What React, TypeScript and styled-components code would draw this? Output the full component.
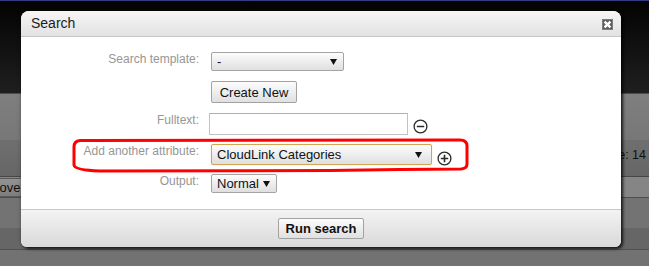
import React from "react";
import styled, { createGlobalStyle } from "styled-components";

const Global = createGlobalStyle`
  *, *::before, *::after { box-sizing: border-box; }
  html, body { margin: 0; padding: 0; }
  body {
    width: 649px;
    height: 266px;
    overflow: hidden;
    background: #727272;
    font-family: "Liberation Sans", Arial, sans-serif;
  }
`;

const Page = styled.div`
  position: relative;
  width: 649px;
  height: 266px;
  overflow: hidden;
`;

/* ---------- background application ---------- */
const Backdrop = styled.div`
  display: flex;
  flex-direction: column;
  height: 100%;
`;

const TopStripe = styled.div`
  height: 1px;
  background: #343a84;
`;

const Masthead = styled.div`
  height: 93px;
  background: linear-gradient(#030303, #1f1f1f);
  border-bottom: 1px solid #4c4c4c;
`;

const Band = styled.div<{ $h: number; $bg: string; $line?: string }>`
  height: ${(p) => p.$h}px;
  flex: none;
  background: ${(p) => p.$bg};
  border-bottom: ${(p) => (p.$line ? `1px solid ${p.$line}` : "none")};
  display: flex;
  align-items: flex-start;
  justify-content: space-between;
  font-size: 13px;
  line-height: 15px;
  color: #111;
`;

const Rest = styled.div`
  flex: 1;
  background: #727272;
`;

const PagerText = styled.span`
  margin-left: auto;
  padding: 8px 3px 0 0;
  font-size: 12.5px;
  white-space: nowrap;
`;

const ToolButton = styled.span`
  margin: 1px 0 0 -35px;
  padding: 1px 6px;
  height: 19px;
  border: 1px solid #5a5a5a;
  border-radius: 2px;
  background: linear-gradient(#939393, #7e7e7e);
  white-space: nowrap;
`;

/* ---------- dialog ---------- */
const Dialog = styled.div`
  position: absolute;
  left: 21px;
  top: 11px;
  width: 600px;
  height: 236px;
  display: flex;
  flex-direction: column;
  background: #fff;
  border-radius: 8px 8px 6px 6px;
  box-shadow: 2px 2px 3px rgba(0, 0, 0, 0.75), 0 0 4px rgba(0, 0, 0, 0.25);
  overflow: hidden;
`;

const TitleBar = styled.div`
  height: 26px;
  flex: none;
  display: flex;
  align-items: center;
  justify-content: space-between;
  padding: 0 8px 1px 10px;
  background: linear-gradient(#f6f6f6, #e2e2e2);
  border-bottom: 1px solid #c6c6c6;
`;

const Title = styled.span`
  font-size: 14px;
  color: #1c1c1c;
`;

const CloseBox = styled.svg`
  display: block;
  margin-top: 2px;
`;

const Body = styled.div`
  flex: 1;
  display: flex;
  flex-direction: column;
  gap: 9px;
  padding-top: 15px;
`;

const Row = styled.div<{ $h: number }>`
  height: ${(p) => p.$h}px;
  display: flex;
  align-items: flex-start;
  gap: 12px;
`;

const Label = styled.span`
  width: 178px;
  flex: none;
  text-align: right;
  font-size: 12px;
  line-height: 15px;
  color: #969696;
`;

const Controls = styled.div`
  display: flex;
  align-items: flex-start;
  gap: 5px;
`;

const SelectBox = styled.div<{ $w: number; $h: number; $focus?: boolean }>`
  width: ${(p) => p.$w}px;
  height: ${(p) => p.$h}px;
  display: flex;
  align-items: center;
  justify-content: space-between;
  padding: 0 ${(p) => (p.$focus ? 9 : 6)}px 0 5px;
  font-size: 13px;
  color: #111;
  border: 1px solid ${(p) => (p.$focus ? "#d3a552" : "#a4a4a4")};
  border-radius: 2px;
  background: linear-gradient(#fdfdfd, #dfdfdf);
  box-shadow: ${(p) => (p.$focus ? "0 0 1px #e9b868" : "none")};
`;

const Arrow = () => (
  <svg width="7" height="6" viewBox="0 0 7 6">
    <path d="M0 0 H7 L3.5 6 Z" fill="#111" />
  </svg>
);

const Button = styled.button<{ $bold?: boolean; $w: number; $h: number }>`
  width: ${(p) => p.$w}px;
  height: ${(p) => p.$h}px;
  padding: 0;
  font-family: "Liberation Sans", Arial, sans-serif;
  font-size: 13px;
  font-weight: ${(p) => (p.$bold ? 700 : 400)};
  color: #111;
  border: 1px solid #a2a2a2;
  border-radius: 2px;
  background: linear-gradient(#fcfcfc, #e0e0e0);
`;

const TextInput = styled.div`
  width: 199px;
  height: 22px;
  margin-left: -2px;
  border: 1px solid #c2c2c2;
  border-top-color: #b0b0b0;
  background: #fff;
`;

const RoundIcon = styled.svg<{ $dy: number }>`
  display: block;
  margin-top: ${(p) => p.$dy}px;
`;

const Footer = styled.div`
  height: 38px;
  flex: none;
  display: flex;
  align-items: center;
  justify-content: center;
  border-top: 1px solid #c9c9c9;
  background: linear-gradient(#f3f3f3, #d9d9d9);
`;

const Annotation = styled.svg`
  position: absolute;
  left: 0;
  top: 0;
  pointer-events: none;
`;

const CircleIcon = ({ plus, dy }: { plus?: boolean; dy: number }) => (
  <RoundIcon $dy={dy} width="15" height="15" viewBox="0 0 15 15">
    <circle cx="7.5" cy="7.5" r="6.4" fill="none" stroke="#2a2a2a" strokeWidth="1.3" />
    <path d="M3.8 7.5 H11.2" stroke="#2a2a2a" strokeWidth="1.6" />
    {plus && <path d="M7.5 3.8 V11.2" stroke="#2a2a2a" strokeWidth="1.6" />}
  </RoundIcon>
);

export default function App() {
  return (
    <Page>
      <Global />
      <Backdrop>
        <TopStripe />
        <Masthead />
        <Band $h={46} $bg="linear-gradient(#7f7f7f, #777777)" />
        <Band $h={37} $bg="linear-gradient(#6f6f6f, #666666)" $line="#474747">
          <PagerText>Page: 14</PagerText>
        </Band>
        <Band $h={21} $bg="#858585" $line="#4e4e4e">
          <ToolButton>Remove -</ToolButton>
        </Band>
        <Band $h={30} $bg="#737373" />
        <Band $h={22} $bg="#666666" $line="#525252" />
        <Rest />
      </Backdrop>

      <Dialog>
        <TitleBar>
          <Title>Search</Title>
          <CloseBox width="11" height="11" viewBox="0 0 11 11">
            <rect x="0.5" y="0.5" width="10" height="10" fill="#5e5e5e" stroke="#7c7c7c" />
            <path d="M2.6 2.6 L8.4 8.4 M8.4 2.6 L2.6 8.4" stroke="#fff" strokeWidth="2.4" />
          </CloseBox>
        </TitleBar>

        <Body>
          <Row $h={20}>
            <Label>Search template:</Label>
            <SelectBox $w={133} $h={19}>
              <span>-</span>
              <Arrow />
            </SelectBox>
          </Row>
          <Row $h={23}>
            <Label />
            <Button $w={86} $h={22}>Create New</Button>
          </Row>
          <Row $h={22}>
            <Label>Fulltext:</Label>
            <Controls>
              <TextInput />
              <CircleIcon dy={6} />
            </Controls>
          </Row>
          <Row $h={21}>
            <Label>Add another attribute:</Label>
            <Controls>
              <SelectBox $w={221} $h={21} $focus>
                <span>CloudLink Categories</span>
                <Arrow />
              </SelectBox>
              <CircleIcon plus dy={7} />
            </Controls>
          </Row>
          <Row $h={19}>
            <Label>Output:</Label>
            <SelectBox $w={66} $h={19}>
              <span>Normal</span>
              <Arrow />
            </SelectBox>
          </Row>
        </Body>

        <Footer>
          <Button $bold $w={86} $h={21}>Run search</Button>
        </Footer>
      </Dialog>

      <Annotation width="649" height="266" viewBox="0 0 649 266">
        <path
          d="M80 140.5 L460 140 Q467 140 467 146 L467 164 Q467 168.5 461 169 L400 169.5 L330 170.5 L100 171 Q74 170 74 165 L74 147 Q74 141 80 140.5 Z"
          fill="none"
          stroke="#ff0000"
          strokeWidth="3"
        />
      </Annotation>
    </Page>
  );
}
